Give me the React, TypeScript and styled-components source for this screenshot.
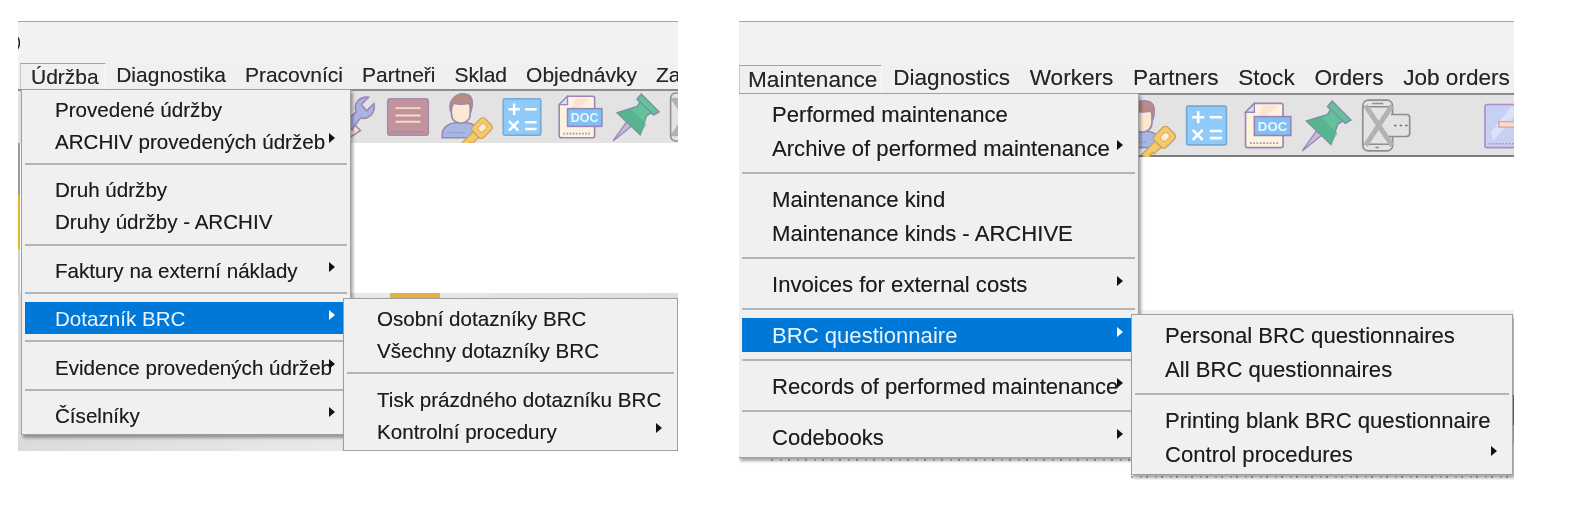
import React from 'react'
import styled, { createGlobalStyle } from 'styled-components'

interface MenuEntry {
  label?: string
  arrow?: boolean
  active?: boolean
  sub?: MenuEntry[]
}

interface ScreenConfig {
  width: number
  height: number
  titleHeight: number
  titleGlyph?: string
  barHeight: number
  barFont: number
  barPadLeft: number
  barItemPad: number
  tabPad: string
  menuFont: number
  rowHeight: number
  sepHeight: number
  menuLeft: number
  menuWidth: number
  subWidth: number
  tabs: string[]
  menu: MenuEntry[]
  toolbarHeight: number
  toolbarPad: number
  iconPitch: number
  iconSize: number
  icons: IconName[]
  dark?: boolean
  backdropHeight: number
}

type IconName = 'wrench' | 'list' | 'user' | 'calc' | 'doc' | 'pin' | 'phone' | 'gap' | 'mirror'

const SEP: MenuEntry = {}

const czech: ScreenConfig = {
  width: 660,
  height: 430,
  titleHeight: 42,
  titleGlyph: ')',
  barHeight: 26,
  barFont: 21,
  barPadLeft: 2,
  barItemPad: 9.5,
  tabPad: '1px 6px 0 10px',
  menuFont: 20.6,
  rowHeight: 32,
  sepHeight: 16.4,
  menuLeft: 0,
  menuWidth: 330,
  subWidth: 335,
  tabs: ['Údržba', 'Diagnostika', 'Pracovníci', 'Partneři', 'Sklad', 'Objednávky', 'Zakázky'],
  menu: [
    { label: 'Provedené údržby' },
    { label: 'ARCHIV provedených údržeb', arrow: true },
    SEP,
    { label: 'Druh údržby' },
    { label: 'Druhy údržby - ARCHIV' },
    SEP,
    { label: 'Faktury na externí náklady', arrow: true },
    SEP,
    {
      label: 'Dotazník BRC',
      arrow: true,
      active: true,
      sub: [
        { label: 'Osobní dotazníky BRC' },
        { label: 'Všechny dotazníky BRC' },
        SEP,
        { label: 'Tisk prázdného dotazníku BRC' },
        { label: 'Kontrolní procedury', arrow: true },
      ],
    },
    SEP,
    { label: 'Evidence provedených údržeb', arrow: true },
    SEP,
    { label: 'Číselníky', arrow: true },
  ],
  toolbarHeight: 54,
  toolbarPad: 304,
  iconPitch: 57,
  iconSize: 50,
  icons: ['wrench', 'list', 'user', 'calc', 'doc', 'pin', 'phone'],
  backdropHeight: 158,
}

const english: ScreenConfig = {
  width: 775,
  height: 459,
  titleHeight: 44,
  barHeight: 28,
  barFont: 22.6,
  barPadLeft: 0,
  barItemPad: 9.85,
  tabPad: '1px 4px 0 8px',
  menuFont: 22.1,
  rowHeight: 34,
  sepHeight: 17,
  menuLeft: -2,
  menuWidth: 401,
  subWidth: 382,
  tabs: ['Maintenance', 'Diagnostics', 'Workers', 'Partners', 'Stock', 'Orders', 'Job orders'],
  menu: [
    { label: 'Performed maintenance' },
    { label: 'Archive of performed maintenance', arrow: true },
    SEP,
    { label: 'Maintenance kind' },
    { label: 'Maintenance kinds - ARCHIVE' },
    SEP,
    { label: 'Invoices for external costs', arrow: true },
    SEP,
    {
      label: 'BRC questionnaire',
      arrow: true,
      active: true,
      sub: [
        { label: 'Personal BRC questionnaires' },
        { label: 'All BRC questionnaires' },
        SEP,
        { label: 'Printing blank BRC questionnaire' },
        { label: 'Control procedures', arrow: true },
      ],
    },
    SEP,
    { label: 'Records of performed maintenance', arrow: true },
    SEP,
    { label: 'Codebooks', arrow: true },
  ],
  toolbarHeight: 64,
  toolbarPad: 377,
  iconPitch: 60,
  iconSize: 53,
  icons: ['user', 'calc', 'doc', 'pin', 'phone', 'gap', 'mirror'],
  dark: true,
  backdropHeight: 170,
}

const GlobalStyle = createGlobalStyle`
  body {
    margin: 0;
    background: #fff;
    font-family: "Liberation Sans", Arial, sans-serif;
    color: #1c1c1c;
  }
`

const Page = styled.div`
  display: flex;
  align-items: flex-start;
  gap: 61px;
  height: 524px;
  box-sizing: border-box;
  padding: 21px 0 0 18px;
  overflow: hidden;
`

const Screen = styled.div<{ $width: number; $height: number }>`
  display: flex;
  flex-direction: column;
  flex: none;
  width: ${p => p.$width}px;
  height: ${p => p.$height}px;
  overflow: hidden;
  filter: blur(0.35px);
  text-shadow: 0 0 0.6px rgba(0, 0, 0, 0.45);
`

const TitleStrip = styled.div<{ $height: number }>`
  flex: none;
  height: ${p => p.$height}px;
  box-sizing: border-box;
  border-top: 1px solid #a6a6a6;
  background: #f2f2f2;
  font-size: 15px;
  line-height: 40px;
  overflow: hidden;
  span {
    margin-left: -2px;
  }
`

const MenuBar = styled.div<{ $height: number; $font: number; $padLeft: number }>`
  position: relative;
  z-index: 2;
  flex: none;
  display: flex;
  height: ${p => p.$height}px;
  padding-left: ${p => p.$padLeft}px;
  background: #f0f0f0;
  font-size: ${p => p.$font}px;
  line-height: ${p => p.$height - 3}px;
  white-space: nowrap;
`

const Tab = styled.div<{ $itemPad: number; $openPad?: string }>`
  position: relative;
  flex: none;
  padding: ${p => p.$openPad || `0 ${p.$itemPad}px`};
  margin-right: ${p => (p.$openPad ? '1px' : '0')};
  color: #262626;
  box-sizing: border-box;
  ${p => p.$openPad && 'border-top: 1px solid #a3a3a3; border-left: 1px solid #c6c6c6; border-right: 1px solid #fafafa;'}
`

const Toolbar = styled.div<{ $height: number; $pad: number; $dark?: boolean }>`
  flex: none;
  display: flex;
  align-items: center;
  box-sizing: border-box;
  height: ${p => p.$height}px;
  padding-left: ${p => p.$pad}px;
  background: #e3e3e3;
  border-top: 2px solid #8c8c8c;
  border-bottom: ${p => (p.$dark ? '2px solid #7c7c7c' : '0')};
`

const IconSlot = styled.div<{ $pitch: number }>`
  flex: none;
  width: ${p => p.$pitch}px;
  display: flex;
  justify-content: center;
  svg {
    flex: none;
    display: block;
    overflow: visible;
  }
`

const Workspace = styled.div<{ $dark?: boolean }>`
  flex: 1;
  background: #fff;
  ${p =>
    !p.$dark &&
    'background: linear-gradient(to bottom, #9a9a9a 0 52px, #e6b52c 52px 106px, #cfcfcf 106px) left top / 2px 100% no-repeat #fff;'}
`

const Backdrop = styled.div<{ $height: number; $dark?: boolean }>`
  flex: none;
  height: ${p => p.$height}px;
  ${p =>
    p.$dark
      ? `background:
          linear-gradient(#f3f3f3, #f3f3f3) left top / 100% 5px no-repeat,
          linear-gradient(to bottom, transparent 0 85px, #3d93c9 85px 115px, #bcd8e6 115px 135px, transparent 135px) right top / 2px 100% no-repeat,
          repeating-linear-gradient(to right, #a8a8a8 0 2px, transparent 2px 9px, #c4c4c4 9px 11px, transparent 11px 17px) 32px 149px / 360px 2px no-repeat,
          repeating-linear-gradient(to right, #b0b0b0 0 2px, transparent 2px 9px, #cacaca 9px 11px, transparent 11px 15px) 392px 166px / 381px 2px no-repeat,
          #fff;`
      : `background:
          linear-gradient(#e2b344, #e2b344) 372px top / 50px 5px no-repeat,
          linear-gradient(to right, #d9dbdc, #e9e9e9 50%, #dedede) #e6e6e6;`}
`

const MenuPanel = styled.div<{ $font: number; $row: number; $sep: number; $width: number }>`
  --row: ${p => p.$row}px;
  --sep: ${p => p.$sep}px;
  position: absolute;
  z-index: 3;
  width: ${p => p.$width}px;
  box-sizing: border-box;
  padding: 3px;
  border: 1px solid #a0a0a0;
  background: #f0f0f0;
  box-shadow: 2px 3px 3px rgba(0, 0, 0, 0.35);
  font-size: ${p => p.$font}px;
  color: #1c1c1c;
`

const DropMenu = styled(MenuPanel)<{ $left: number }>`
  top: 100%;
  left: ${p => p.$left}px;
`

const SubMenu = styled(MenuPanel)`
  top: -4px;
  left: calc(100% - 4px);
`

const Row = styled.div<{ $active?: boolean }>`
  position: relative;
  height: var(--row);
  line-height: calc(var(--row) + 1px);
  padding-left: 30px;
  white-space: nowrap;
  background: ${p => (p.$active ? '#0078d7' : 'transparent')};
  color: ${p => (p.$active ? '#eaf3fb' : 'inherit')};
  ${p => p.$active && 'text-shadow: none;'}
  & > div {
    text-shadow: 0 0 0.6px rgba(0, 0, 0, 0.45);
    line-height: normal;
  }
`

const Arrow = styled.i<{ $active?: boolean }>`
  position: absolute;
  right: 12px;
  top: calc(50% - 8px);
  width: 0;
  height: 0;
  border-style: solid;
  border-width: 5.5px 0 5.5px 6px;
  border-color: transparent transparent transparent ${p => (p.$active ? '#fff' : '#111')};
`

const Separator = styled.div`
  height: var(--sep);
  display: flex;
  align-items: center;
  &::after {
    content: '';
    flex: 1;
    height: 2px;
    margin-top: -2px;
    background: #b4b4b4;
  }
`

const STROKE = '#9a86b4'

const Icon: React.FC<{ name: IconName; size: number }> = ({ name, size }) => {
  switch (name) {
    case 'wrench':
      return (
        <svg width={size} height={size} viewBox="0 0 48 48">
          <path d="M4 38 L20 24 L33 37 L16 48 Z" fill="#f4e3c8" stroke={STROKE} strokeWidth="1.5" />
          <path d="M12 32 L22 42 M17 28 L27 38" stroke="#d9bfa0" strokeWidth="1.5" />
          <path d="M18 29 L29 19 C26 11 32 4 41 5 L34 12 L39 18 L46 11 C48 20 41 27 33 25 L25 36 Z" fill="#a9b2e3" stroke={STROKE} strokeWidth="1.5" />
        </svg>
      )
    case 'list':
      return (
        <svg width={size} height={size} viewBox="0 0 48 48">
          <rect x="4.5" y="6.5" width="39" height="35" rx="2.5" fill="#c3939b" stroke="#a78cab" strokeWidth="1.5" />
          <path d="M12 15.5h24M12 22.5h24M12 28.5h24" stroke="#f3dcc8" strokeWidth="1.8" />
          <path d="M8 38.5h32" stroke="#9b7f9c" strokeWidth="1.5" strokeDasharray="1.5 1.5" />
        </svg>
      )
    case 'user':
      return (
        <svg width={size} height={size} viewBox="0 0 48 48">
          <path d="M2 42 C2 33 9 29 21 29 C31 29 37 33 37 42 L37 44 L2 44 Z" fill="#a8b6e2" stroke={STROKE} strokeWidth="1.5" />
          <path d="M11 14 C11 6 29 6 29 14 L29 21 C29 33 11 33 11 21 Z" fill="#fbe8d3" stroke={STROKE} strokeWidth="1.5" />
          <path d="M10 18 C7 7 17 0 25 2 C32 3 32 11 30 18 L28 11 C23 12 17 12 13 11 Z" fill="#b98a86" stroke={STROKE} strokeWidth="1.2" />
          <path d="M7 39h18" stroke="#8593c4" strokeWidth="1.2" strokeDasharray="1.5 1.5" />
          <g transform="rotate(-45 40 35)">
            <path d="M34 31.5 H15 V39 H19 V37 H23 V39 H34 Z" fill="#f5c96a" stroke="#c9a25e" strokeWidth="1.2" />
            <rect x="32" y="27.5" width="17" height="15" rx="3.5" fill="#f5c96a" stroke="#c9a25e" strokeWidth="1.2" />
            <rect x="37" y="32" width="8" height="6" rx="2" fill="#fbeecb" stroke="#c9a25e" strokeWidth="0.8" />
          </g>
        </svg>
      )
    case 'calc':
      return (
        <svg width={size} height={size} viewBox="0 0 48 48">
          <rect x="6" y="6.5" width="36" height="35" rx="1.5" fill="#8fcaf9" stroke="#75a9d6" strokeWidth="1.5" />
          <path d="M11 16.5h11M16.5 11v11M27 16.5h11M11.5 28l9 9M20.5 28l-9 9M27 29h11M27 35.5h11" stroke="#fff" strokeWidth="2.4" fill="none" />
        </svg>
      )
    case 'doc':
      return (
        <svg width={size} height={size} viewBox="0 0 48 48">
          <path d="M13 4 H37 Q39 4 39 6 V42 Q39 44 37 44 H7 Q5 44 5 42 V12 Z" fill="#fdf2df" stroke={STROKE} strokeWidth="1.5" />
          <path d="M13 4 V12 H5 Z" fill="#cfe4f7" stroke={STROKE} strokeWidth="1.2" />
          <path d="M20 6 L34 6 L16 22 Z" fill="#fbe3cf" />
          <path d="M9 40h26" stroke="#a58cb0" strokeWidth="1.6" strokeDasharray="1.5 1.5" />
          <rect x="13" y="16" width="33" height="17" fill="#7fc1f7" stroke={STROKE} strokeWidth="1.5" />
          <text x="29.5" y="29" textAnchor="middle" fontFamily="Liberation Sans, sans-serif" fontWeight="700" fontSize="12" fill="#eaf5ff" style={{ textShadow: 'none' }}>DOC</text>
        </svg>
      )
    case 'pin':
      return (
        <svg width={size} height={size} viewBox="0 0 48 48">
          <path d="M2 47 L17 26 L22 31 Z" fill="#c6b7dd" stroke="#9a86b4" strokeWidth="1.2" />
          <path d="M6 20 L25 14 L30 6 L42 18 L34 23 L28 41 Z" fill="#62c39b" stroke="#7b93a6" strokeWidth="1.5" />
          <path d="M29 2 L46 19 L41 22 L25 7 Z" fill="#62c39b" stroke="#7b93a6" strokeWidth="1.5" />
          <path d="M19 16 L34 31 L28 41 L6 20 Z" fill="#54ac8a" opacity="0.6" />
        </svg>
      )
    case 'phone':
      return (
        <svg width={size} height={size} viewBox="0 0 48 48">
          <rect x="2.5" y="1" width="27" height="46" rx="5" fill="#e3e3e3" stroke="#8e8e8e" strokeWidth="1.5" />
          <path d="M3 7h26M3 41h26" stroke="#8e8e8e" strokeWidth="1.5" />
          <path d="M11 4h10M14 44h3" stroke="#8e8e8e" strokeWidth="1.4" />
          <path d="M28 14 H42 Q45 14 45 17 V31 Q45 34 42 34 H26" fill="#e3e3e3" stroke="#8e8e8e" strokeWidth="1.5" />
          <path d="M31 24h2M36 24h2M41 24h2" stroke="#666" strokeWidth="1.5" />
          <path d="M5 6 L29 42 M29 6 L5 42" stroke="#b2b2b2" strokeWidth="4.5" />
        </svg>
      )
    case 'mirror':
      return (
        <svg width={size} height={size} viewBox="0 0 48 48">
          <rect x="4.5" y="5" width="38" height="39" rx="2" fill="#c8d0f2" stroke="#a98fc6" strokeWidth="1.5" />
          <path d="M10 30 L28 7 H38 L12 38 Z" fill="#dbe2f8" />
          <path d="M8 40.5h32" stroke="#a98fc6" strokeWidth="1.5" strokeDasharray="1.5 1.5" />
          <rect x="17" y="20.5" width="40" height="5" fill="#f8dcc6" stroke="#cfa8b4" strokeWidth="1.2" />
        </svg>
      )
    default:
      return <svg width={size} height={size} />
  }
}

const MenuRows: React.FC<{ entries: MenuEntry[]; font: number; row: number; sep: number; subWidth: number }> = ({
  entries,
  font,
  row,
  sep,
  subWidth,
}) => (
  <>
    {entries.map((entry, i) =>
      entry.label ? (
        <Row key={i} $active={entry.active}>
          {entry.label}
          {entry.arrow && <Arrow $active={entry.active} />}
          {entry.sub && (
            <SubMenu $font={font} $row={row} $sep={sep} $width={subWidth}>
              <MenuRows entries={entry.sub} font={font} row={row} sep={sep} subWidth={subWidth} />
            </SubMenu>
          )}
        </Row>
      ) : (
        <Separator key={i} />
      ),
    )}
  </>
)

const AppScreen: React.FC<{ config: ScreenConfig }> = ({ config }) => (
  <Screen $width={config.width} $height={config.height}>
    <TitleStrip $height={config.titleHeight}>{config.titleGlyph && <span>{config.titleGlyph}</span>}</TitleStrip>
    <MenuBar $height={config.barHeight} $font={config.barFont} $padLeft={config.barPadLeft}>
      {config.tabs.map((tab, i) => (
        <Tab key={tab} $itemPad={config.barItemPad} $openPad={i === 0 ? config.tabPad : undefined}>
          {tab}
          {i === 0 && (
            <DropMenu
              $left={config.menuLeft}
              $font={config.menuFont}
              $row={config.rowHeight}
              $sep={config.sepHeight}
              $width={config.menuWidth}
            >
              <MenuRows
                entries={config.menu}
                font={config.menuFont}
                row={config.rowHeight}
                sep={config.sepHeight}
                subWidth={config.subWidth}
              />
            </DropMenu>
          )}
        </Tab>
      ))}
    </MenuBar>
    <Toolbar $height={config.toolbarHeight} $pad={config.toolbarPad} $dark={config.dark}>
      {config.icons.map((name, i) => (
        <IconSlot key={i} $pitch={config.iconPitch}>
          <Icon name={name} size={config.iconSize} />
        </IconSlot>
      ))}
    </Toolbar>
    <Workspace $dark={config.dark} />
    <Backdrop $height={config.backdropHeight} $dark={config.dark} />
  </Screen>
)

const App: React.FC = () => (
  <>
    <GlobalStyle />
    <Page>
      <AppScreen config={czech} />
      <AppScreen config={english} />
    </Page>
  </>
)

export default App
